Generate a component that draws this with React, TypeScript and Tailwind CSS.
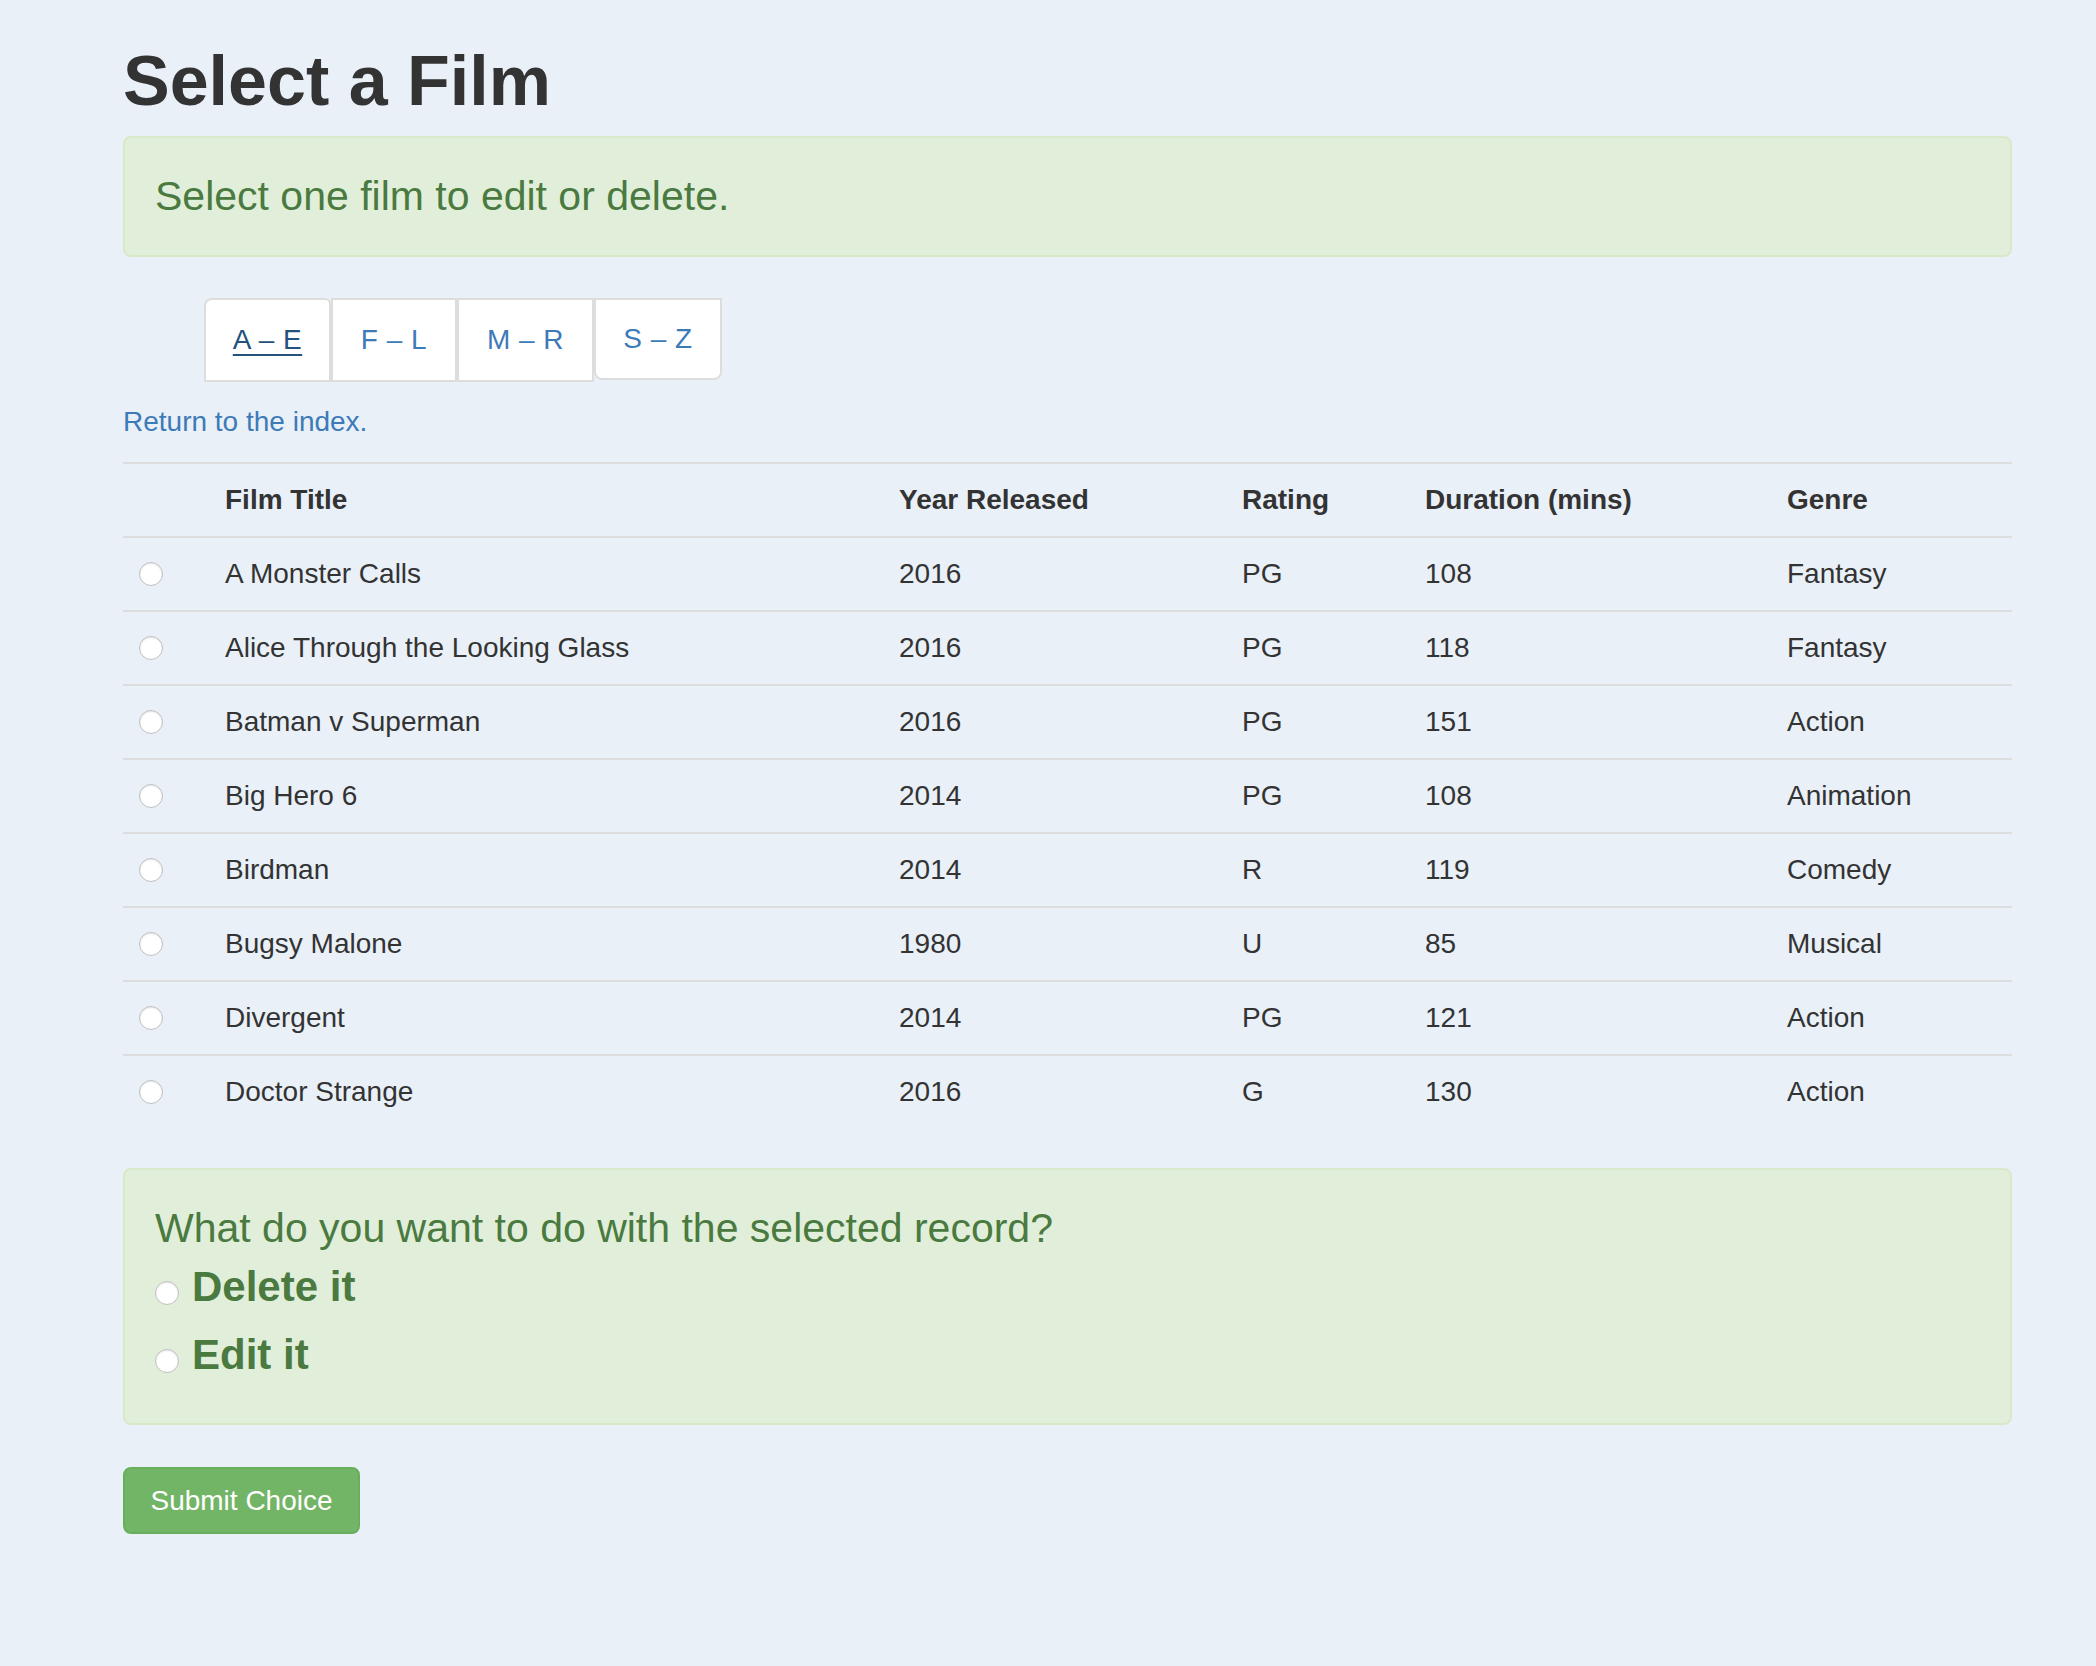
import React from 'react';

type Film = {
  title: string;
  year: string;
  rating: string;
  duration: string;
  genre: string;
};

const films: Film[] = [
  { title: 'A Monster Calls', year: '2016', rating: 'PG', duration: '108', genre: 'Fantasy' },
  { title: 'Alice Through the Looking Glass', year: '2016', rating: 'PG', duration: '118', genre: 'Fantasy' },
  { title: 'Batman v Superman', year: '2016', rating: 'PG', duration: '151', genre: 'Action' },
  { title: 'Big Hero 6', year: '2014', rating: 'PG', duration: '108', genre: 'Animation' },
  { title: 'Birdman', year: '2014', rating: 'R', duration: '119', genre: 'Comedy' },
  { title: 'Bugsy Malone', year: '1980', rating: 'U', duration: '85', genre: 'Musical' },
  { title: 'Divergent', year: '2014', rating: 'PG', duration: '121', genre: 'Action' },
  { title: 'Doctor Strange', year: '2016', rating: 'G', duration: '130', genre: 'Action' },
];

const Radio: React.FC<{ className?: string }> = ({ className = '' }) => (
  <span
    className={`block w-[24px] h-[24px] rounded-full bg-white border border-[#bfbfbf] shadow-[inset_0_1px_2px_rgba(0,0,0,0.1)] ${className}`}
  />
);

export default function App() {
  return (
    <div className="min-h-[1666px] bg-[#e9f0f8] text-[#333] font-['Liberation_Sans',Arial,sans-serif]">
      <div className="ml-[123px] w-[1889px] pt-[43px] pb-[40px]">
        {/* Heading */}
        <h1 className="text-[70px] leading-[77px] font-bold text-[#333] mb-[16px]">Select a Film</h1>

        {/* Info alert */}
        <div className="bg-[#e1efda] border-2 border-[#d7e9c8] rounded-[8px] px-[30px] py-[30px]">
          <p className="text-[41px] leading-[57px] text-[#4a7a40]">Select one film to edit or delete.</p>
        </div>

        {/* Letter range tabs */}
        <div className="flex items-start mt-[41px] ml-[81px]">
          <a href="#ae" className="w-[127px] h-[84px] flex items-center justify-center bg-white border-2 border-[#dddddd] rounded-tl-[8px] rounded-tr-[6px] text-[28px] tracking-[0.5px] text-[#23527c] underline underline-offset-[5px] decoration-2">
            A – E
          </a>
          <a href="#fl" className="w-[126px] h-[84px] flex items-center justify-center bg-white border-2 border-[#dddddd] text-[28px] tracking-[0.5px] text-[#3d7ab8]">
            F – L
          </a>
          <a href="#mr" className="w-[137px] h-[84px] flex items-center justify-center bg-white border-2 border-[#dddddd] text-[28px] tracking-[0.5px] text-[#3d7ab8]">
            M – R
          </a>
          <a href="#sz" className="w-[128px] h-[82px] flex items-center justify-center bg-white border-2 border-[#dddddd] rounded-b-[8px] text-[28px] tracking-[0.5px] text-[#3d7ab8]">
            S – Z
          </a>
        </div>

        <p className="mt-[20px] text-[28px] leading-[40px]">
          <a href="#index" className="text-[#3d7ab8]">Return to the index.</a>
        </p>

        {/* Films table */}
        <table className="mt-[20px] w-[1889px] table-fixed border-collapse text-[28px] leading-[40px]">
          <colgroup>
            <col className="w-[86px]" />
            <col className="w-[674px]" />
            <col className="w-[343px]" />
            <col className="w-[183px]" />
            <col className="w-[362px]" />
            <col className="w-[241px]" />
          </colgroup>
          <thead>
            <tr className="border-t-2 border-[#dddddd]">
              <th className="p-[16px]"></th>
              <th className="p-[16px] text-left font-bold">Film Title</th>
              <th className="p-[16px] text-left font-bold">Year Released</th>
              <th className="p-[16px] text-left font-bold">Rating</th>
              <th className="p-[16px] text-left font-bold">Duration (mins)</th>
              <th className="p-[16px] text-left font-bold">Genre</th>
            </tr>
          </thead>
          <tbody>
            {films.map((film) => (
              <tr key={film.title} className="border-t-2 border-[#dddddd]">
                <td className="p-[16px] align-top">
                  <Radio className="mt-[8px]" />
                </td>
                <td className="p-[16px]">{film.title}</td>
                <td className="p-[16px]">{film.year}</td>
                <td className="p-[16px]">{film.rating}</td>
                <td className="p-[16px]">{film.duration}</td>
                <td className="p-[16px]">{film.genre}</td>
              </tr>
            ))}
          </tbody>
        </table>

        {/* Action alert */}
        <div className="mt-[40px] bg-[#e1efda] border-2 border-[#d7e9c8] rounded-[8px] px-[30px] py-[30px] text-[#4a7a40]">
          <p className="text-[41px] leading-[57px]">What do you want to do with the selected record?</p>
          <label className="flex items-start h-[68px]">
            <Radio className="mt-[24px]" />
            <span className="ml-[13px] text-[42px] leading-[60px] font-bold">Delete it</span>
          </label>
          <label className="flex items-start h-[68px]">
            <Radio className="mt-[24px]" />
            <span className="ml-[13px] text-[42px] leading-[60px] font-bold">Edit it</span>
          </label>
        </div>

        <button className="mt-[42px] w-[237px] h-[67px] rounded-[8px] bg-[#73b566] border-2 border-[#69ae5c] text-white text-[28px] leading-[40px]">
          Submit Choice
        </button>
      </div>
    </div>
  );
}
